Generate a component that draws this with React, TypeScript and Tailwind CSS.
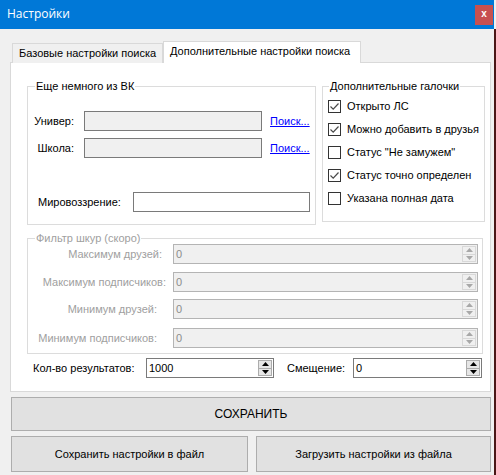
import React from "react";

const F = { fontFamily: '"Liberation Sans", Arial, sans-serif' };

function Check({ checked, label }: { checked: boolean; label: string }) {
  return (
    <div className="flex h-[23px] items-center">
      <span className="flex h-[13px] w-[13px] items-center justify-center border border-[#333333] bg-white">
        {checked && (
          <svg width="11" height="11" viewBox="0 0 11 11">
            <path d="M1.5 5.5 L4.2 8.2 L9.5 2.5" fill="none" stroke="#4a4a4a" strokeWidth="1.2" />
          </svg>
        )}
      </span>
      <span className="ml-[6px] text-[11px] leading-[13px] text-black">{label}</span>
    </div>
  );
}

function Arrow({ up, color }: { up: boolean; color: string }) {
  return (
    <svg width="7" height="4" viewBox="0 0 7 4">
      {up ? <path d="M0 4 L3.5 0 L7 4 Z" fill={color} /> : <path d="M0 0 L7 0 L3.5 4 Z" fill={color} />}
    </svg>
  );
}

function Spin({ disabled }: { disabled?: boolean }) {
  const c = disabled ? "#a8a8a8" : "#000000";
  const b = disabled ? "border-[#d8d8d8] bg-[#f0f0f0]" : "border-[#acacac] bg-[#e6e6e6]";
  return (
    <div className="mr-[1px] flex h-full w-[14px] flex-col py-[1px]">
      <div className={`flex flex-1 items-center justify-center border ${b}`}>
        <Arrow up color={c} />
      </div>
      <div className={`flex flex-1 items-center justify-center border border-t-0 ${b}`}>
        <Arrow up={false} color={c} />
      </div>
    </div>
  );
}

function DisabledRow({ label, pr, mt }: { label: string; pr: string; mt: string }) {
  return (
    <div className={`flex h-[20px] items-center ${mt}`}>
      <div className={`w-[145px] text-right text-[11px] text-[#a0a0a0] ${pr}`}>{label}</div>
      <div className="flex h-[20px] w-[305px] items-center justify-between border border-[#b4b4b4] bg-[#f0f0f0]">
        <span className="pl-[2px] text-[11px] text-[#8c8c8c]">0</span>
        <Spin disabled />
      </div>
    </div>
  );
}

export default function App() {
  return (
    <div className="flex h-[475px] w-[496px] flex-col overflow-hidden bg-[#f0f0f0]" style={F}>
      {/* Title bar */}
      <div className="flex h-[29px] w-[494px] shrink-0 justify-between bg-[#0078d7]">
        <span
          className="pl-[7px] pt-[6px] text-[12px] leading-[16px] text-white"
          style={{ fontFamily: '"Open Sans", "Noto Sans", sans-serif' }}
        >
          Настройки
        </span>
        <div className="mr-[1px] mt-[5px] flex h-[20px] w-[18px] items-center justify-center bg-[#c75050] pb-[2px] text-[10px] font-bold leading-none text-white">
          x
        </div>
      </div>

      <div className="flex flex-1">
        <div className="flex w-[494px] flex-col pl-[10px] pr-[3px]">
          {/* Tabs */}
          <div className="relative z-10 -mb-px flex h-[34px] items-end pl-[2px]">
            <div className="flex h-[20px] w-[151px] items-center border border-b-0 border-[#d9d9d9] bg-[#f0f0f0] pl-[6px] text-[11px] text-black">
              Базовые настройки поиска
            </div>
            <div className="flex h-[22px] w-[198px] items-center border border-b-0 border-[#d9d9d9] bg-white pb-[3px] pl-[6px] text-[11px] text-black">
              Дополнительные настройки поиска
            </div>
          </div>

          {/* Tab page */}
          <div className="flex h-[330px] w-[481px] flex-col border border-[#d9d9d9] bg-white pl-[16px] pt-[23px]">
            <div className="flex">
              {/* Group 1 */}
              <div className="relative h-[139px] w-[289px] border border-[#dcdcdc] pt-[24px]">
                <span className="absolute left-[7px] top-[-7px] bg-white px-[1px] text-[11px] leading-[13px] text-black">
                  Еще немного из ВК
                </span>
                <div className="flex h-[20px] items-center">
                  <div className="w-[46px] text-right text-[11px] text-black">Универ:</div>
                  <div className="ml-[10px] h-[20px] w-[178px] border border-[#7a7a7a] bg-[#f0f0f0]" />
                  <span className="ml-[8px] text-[11px] text-[#0000ff] underline">Поиск...</span>
                </div>
                <div className="mt-[7px] flex h-[20px] items-center">
                  <div className="w-[46px] text-right text-[11px] text-black">Школа:</div>
                  <div className="ml-[10px] h-[20px] w-[178px] border border-[#7a7a7a] bg-[#f0f0f0]" />
                  <span className="ml-[8px] text-[11px] text-[#0000ff] underline">Поиск...</span>
                </div>
                <div className="mt-[34px] flex h-[20px] items-center pl-[10px]">
                  <div className="w-[95px] text-[11px] text-black">Мировоззрение:</div>
                  <div className="h-[20px] w-[177px] border border-[#7a7a7a] bg-white" />
                </div>
              </div>

              {/* Group 2 */}
              <div className="relative ml-[6px] h-[136px] w-[163px] border border-[#dcdcdc] pl-[5px] pt-[8px]">
                <span className="absolute left-[6px] top-[-7px] bg-white px-[1px] text-[11px] leading-[13px] text-black">
                  Дополнительные галочки
                </span>
                <Check checked label="Открыто ЛС" />
                <Check checked label="Можно добавить в друзья" />
                <Check checked={false} label='Статус "Не замужем"' />
                <Check checked label="Статус точно определен" />
                <Check checked={false} label="Указана полная дата" />
              </div>
            </div>

            {/* Group 3 */}
            <div className="relative mt-[13px] h-[116px] w-[456px] border border-[#dcdcdc] pt-[5px]">
              <span className="absolute left-[7px] top-[-7px] bg-white px-[1px] text-[11px] leading-[13px] text-[#a0a0a0]">
                Фильтр шкур (скоро)
              </span>
              <DisabledRow label="Максимум друзей:" pr="pr-[11px]" mt="" />
              <DisabledRow label="Максимум подписчиков:" pr="pr-[7px]" mt="mt-[8px]" />
              <DisabledRow label="Минимум друзей:" pr="pr-[16px]" mt="mt-[7px]" />
              <DisabledRow label="Минимум подписчиков:" pr="pr-[16px]" mt="mt-[9px]" />
            </div>

            {/* Bottom row */}
            <div className="-ml-[16px] mt-[4px] flex h-[20px] items-center pl-[22px]">
              <div className="w-[113px] text-[11px] text-black">Кол-во результатов:</div>
              <div className="flex h-[20px] w-[128px] items-center justify-between border border-[#7a7a7a] bg-white">
                <span className="pl-[2px] text-[11px] text-black">1000</span>
                <Spin />
              </div>
              <div className="ml-[13px] w-[66px] text-[11px] text-black">Смещение:</div>
              <div className="flex h-[20px] w-[129px] items-center justify-between border border-[#7a7a7a] bg-white">
                <span className="pl-[2px] text-[11px] text-black">0</span>
                <Spin />
              </div>
            </div>
          </div>

          {/* Save */}
          <div className="ml-[1px] mt-[5px] flex h-[34px] w-[480px] items-center justify-center border border-[#adadad] bg-[#e1e1e1] text-[12px] text-black">
            СОХРАНИТЬ
          </div>
          <div className="ml-[1px] mt-[5px] flex w-[480px] justify-between">
            <div className="flex h-[36px] w-[237px] items-center justify-center border border-[#adadad] bg-[#e1e1e1] text-[11px] text-black">
              Сохранить настройки в файл
            </div>
            <div className="flex h-[36px] w-[235px] items-center justify-center border border-[#adadad] bg-[#e1e1e1] text-[11px] text-black">
              Загрузить настройки из файла
            </div>
          </div>
        </div>
        <div className="w-[2px] bg-[#4a1616]" />
      </div>
    </div>
  );
}
